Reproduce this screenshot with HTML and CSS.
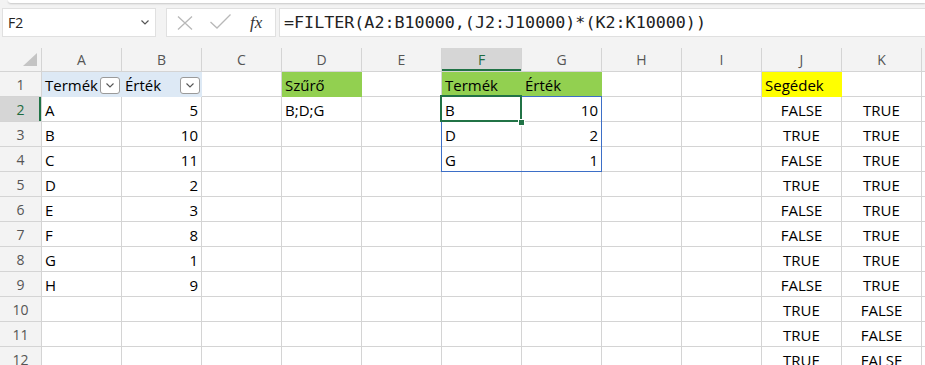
FILE: index.html
```html
<!DOCTYPE html>
<html lang="hu">
<head>
  <meta charset="UTF-8">
  <title>FILTER - Munkafüzet</title>
  <link rel="stylesheet" href="styles.css">
</head>
<body>
  <div class="ribbon-edge"></div>

  <div class="formula-bar">
    <div class="name-box">
      <span>F2</span>
      <svg class="name-chevron" width="8" height="5" viewBox="0 0 8 5"><path d="M0.5 0.5 L4 4 L7.5 0.5" fill="none" stroke="#555" stroke-width="1.2"/></svg>
    </div>
    <div class="fx-box">
      <svg width="16" height="14" viewBox="0 0 16 14"><path d="M1 0.5 L15 13.5 M15 0.5 L1 13.5" stroke="#b8b8b8" stroke-width="1.3" fill="none"/></svg>
      <svg width="21" height="15" viewBox="0 0 21 15"><path d="M0.5 8 L7 14 L20.5 0.5" stroke="#b8b8b8" stroke-width="1.3" fill="none"/></svg>
      <span class="fx">fx</span>
    </div>
    <div class="formula-input">=FILTER(A2:B10000,(J2:J10000)*(K2:K10000))</div>
  </div>

  <div class="sheet">
    <div class="corner"><svg width="42" height="23" viewBox="0 0 42 23"><path d="M37 5 L37 18 L23 18 Z" fill="#c4c4c4"/></svg></div>
    <div class="ch">A</div><div class="ch">B</div><div class="ch">C</div><div class="ch">D</div><div class="ch">E</div>
    <div class="ch ch-sel">F</div><div class="ch">G</div><div class="ch">H</div><div class="ch">I</div><div class="ch">J</div><div class="ch">K</div><div class="ch ch-last"></div>

    <div class="rh">1</div>
    <div class="c tbl-h"><span>Termék</span><span class="drop"><svg width="8" height="5" viewBox="0 0 8 5"><path d="M0.5 0.5 L4 4 L7.5 0.5" fill="none" stroke="#555" stroke-width="1.1"/></svg></span></div>
    <div class="c tbl-h"><span>Érték</span><span class="drop"><svg width="8" height="5" viewBox="0 0 8 5"><path d="M0.5 0.5 L4 4 L7.5 0.5" fill="none" stroke="#555" stroke-width="1.1"/></svg></span></div>
    <div class="c"></div><div class="c green">Szűrő</div><div class="c"></div>
    <div class="c green">Termék</div><div class="c green">Érték</div>
    <div class="c"></div><div class="c"></div><div class="c yellow">Segédek</div><div class="c"></div><div class="c"></div>

    <div class="rh rh-sel">2</div>
    <div class="c">A</div><div class="c r">5</div><div class="c"></div><div class="c">B;D;G</div><div class="c"></div>
    <div class="c">B</div><div class="c r">10</div><div class="c"></div><div class="c"></div><div class="c m">FALSE</div><div class="c m">TRUE</div><div class="c"></div>

    <div class="rh">3</div>
    <div class="c">B</div><div class="c r">10</div><div class="c"></div><div class="c"></div><div class="c"></div>
    <div class="c">D</div><div class="c r">2</div><div class="c"></div><div class="c"></div><div class="c m">TRUE</div><div class="c m">TRUE</div><div class="c"></div>

    <div class="rh">4</div>
    <div class="c">C</div><div class="c r">11</div><div class="c"></div><div class="c"></div><div class="c"></div>
    <div class="c">G</div><div class="c r">1</div><div class="c"></div><div class="c"></div><div class="c m">FALSE</div><div class="c m">TRUE</div><div class="c"></div>

    <div class="rh">5</div>
    <div class="c">D</div><div class="c r">2</div><div class="c"></div><div class="c"></div><div class="c"></div>
    <div class="c"></div><div class="c"></div><div class="c"></div><div class="c"></div><div class="c m">TRUE</div><div class="c m">TRUE</div><div class="c"></div>

    <div class="rh">6</div>
    <div class="c">E</div><div class="c r">3</div><div class="c"></div><div class="c"></div><div class="c"></div>
    <div class="c"></div><div class="c"></div><div class="c"></div><div class="c"></div><div class="c m">FALSE</div><div class="c m">TRUE</div><div class="c"></div>

    <div class="rh">7</div>
    <div class="c">F</div><div class="c r">8</div><div class="c"></div><div class="c"></div><div class="c"></div>
    <div class="c"></div><div class="c"></div><div class="c"></div><div class="c"></div><div class="c m">FALSE</div><div class="c m">TRUE</div><div class="c"></div>

    <div class="rh">8</div>
    <div class="c">G</div><div class="c r">1</div><div class="c"></div><div class="c"></div><div class="c"></div>
    <div class="c"></div><div class="c"></div><div class="c"></div><div class="c"></div><div class="c m">TRUE</div><div class="c m">TRUE</div><div class="c"></div>

    <div class="rh">9</div>
    <div class="c">H</div><div class="c r">9</div><div class="c"></div><div class="c"></div><div class="c"></div>
    <div class="c"></div><div class="c"></div><div class="c"></div><div class="c"></div><div class="c m">FALSE</div><div class="c m">TRUE</div><div class="c"></div>

    <div class="rh">10</div>
    <div class="c"></div><div class="c"></div><div class="c"></div><div class="c"></div><div class="c"></div>
    <div class="c"></div><div class="c"></div><div class="c"></div><div class="c"></div><div class="c m">TRUE</div><div class="c m">FALSE</div><div class="c"></div>

    <div class="rh">11</div>
    <div class="c"></div><div class="c"></div><div class="c"></div><div class="c"></div><div class="c"></div>
    <div class="c"></div><div class="c"></div><div class="c"></div><div class="c"></div><div class="c m">TRUE</div><div class="c m">FALSE</div><div class="c"></div>

    <div class="rh">12</div>
    <div class="c"></div><div class="c"></div><div class="c"></div><div class="c"></div><div class="c"></div>
    <div class="c"></div><div class="c"></div><div class="c"></div><div class="c"></div><div class="c m">TRUE</div><div class="c m">FALSE</div><div class="c"></div>

    <!-- spill range F2:G4 and active cell F2 -->
    <div class="spill"></div>
    <div class="active-cell"></div>
    <div class="fill-handle"></div>
  </div>
</body>
</html>
```

FILE: styles.css
```css
* {
  margin: 0;
  padding: 0;
  box-sizing: border-box;
}

body {
  background: #f3f3f3;
  font-family: 'Open Sans', 'Noto Sans', sans-serif;
  color: #000;
  width: 925px;
  height: 365px;
  overflow: hidden;
}

.ribbon-edge {
  height: 3px;
  margin-left: 8px;
  background: #fff;
  border-radius: 0 0 0 8px;
  box-shadow: 0 1px 2px rgba(0, 0, 0, 0.18);
}

.formula-bar {
  display: flex;
  height: 29px;
  margin-top: 5px;
  padding-left: 2px;
}

.name-box {
  width: 154px;
  background: #fff;
  border: 1px solid #e0e0e0;
  display: flex;
  align-items: center;
  padding: 0 6px 0 5px;
  font-size: 14px;
  color: #222;
}

.name-chevron {
  margin-left: auto;
}

.fx-box {
  width: 110px;
  margin-left: 10px;
  background: #fff;
  border: 1px solid #e0e0e0;
  display: flex;
  align-items: center;
  padding-left: 10px;
}

.fx-box svg:nth-child(2) {
  margin-left: 17px;
  margin-top: -3px;
}

.fx {
  margin-left: 19px;
  font-family: 'Liberation Serif', serif;
  font-style: italic;
  font-size: 17px;
  color: #333;
}

.formula-input {
  flex: 1;
  margin-left: 3px;
  background: #fff;
  border: 1px solid #e0e0e0;
  border-right: none;
  padding-left: 4px;
  font-family: 'DejaVu Sans Mono', 'Liberation Mono', monospace;
  font-size: 16.7px;
  line-height: 26px;
  color: #222;
  white-space: nowrap;
}

.sheet {
  position: relative;
  margin-top: 11px;
  display: grid;
  grid-template-columns: 42px repeat(11, 80px) 1fr;
  grid-template-rows: 24px;
  grid-auto-rows: 25px;
}

.corner,
.ch {
  border-right: 1px solid #d4d4d4;
  border-bottom: 1px solid #d4d4d4;
  text-align: center;
  font-size: 14px;
  line-height: 23px;
  color: #555;
}

.ch-last {
  border-right: none;
}

.ch-sel {
  background: #d6d6d6;
  color: #1e6b41;
  box-shadow: inset 0 -2px 0 #217346;
}

.rh {
  border-right: 1px solid #d4d4d4;
  border-bottom: 1px solid #d4d4d4;
  text-align: center;
  font-size: 14px;
  line-height: 22px;
  padding-top: 2px;
  color: #555;
}

.rh-sel {
  background: #d6d6d6;
  color: #1e6b41;
  box-shadow: inset -2px 0 0 #217346;
}

.c {
  background: #fff;
  border-right: 1px solid #d4d4d4;
  border-bottom: 1px solid #d4d4d4;
  padding: 2px 3px 0;
  font-size: 15px;
  line-height: 22px;
  white-space: nowrap;
  overflow: hidden;
}

.r {
  text-align: right;
}

.m {
  text-align: center;
}

.tbl-h {
  display: flex;
  align-items: flex-start;
  padding-right: 1px;
  background: #dde9f5;
  border-color: #dde9f5;
}

.drop {
  margin-left: auto;
  margin-top: 3px;
  width: 20px;
  height: 17px;
  flex-shrink: 0;
  background: #fff;
  border: 1px solid #9a9a9a;
  border-radius: 3px;
  display: flex;
  align-items: center;
  justify-content: center;
}

.green {
  background: #92d050;
  border-color: #92d050;
}

.yellow {
  background: #ffff00;
  border-color: #ffff00;
}

.spill {
  position: absolute;
  left: 441px;
  top: 48px;
  width: 161px;
  height: 76px;
  border: 1px solid #3d6fc7;
  pointer-events: none;
}

.active-cell {
  position: absolute;
  left: 440px;
  top: 47px;
  width: 82px;
  height: 27px;
  border: 2px solid #217346;
}

.fill-handle {
  position: absolute;
  left: 518px;
  top: 71px;
  width: 7px;
  height: 7px;
  background: #217346;
  border: 1px solid #fff;
}
```
